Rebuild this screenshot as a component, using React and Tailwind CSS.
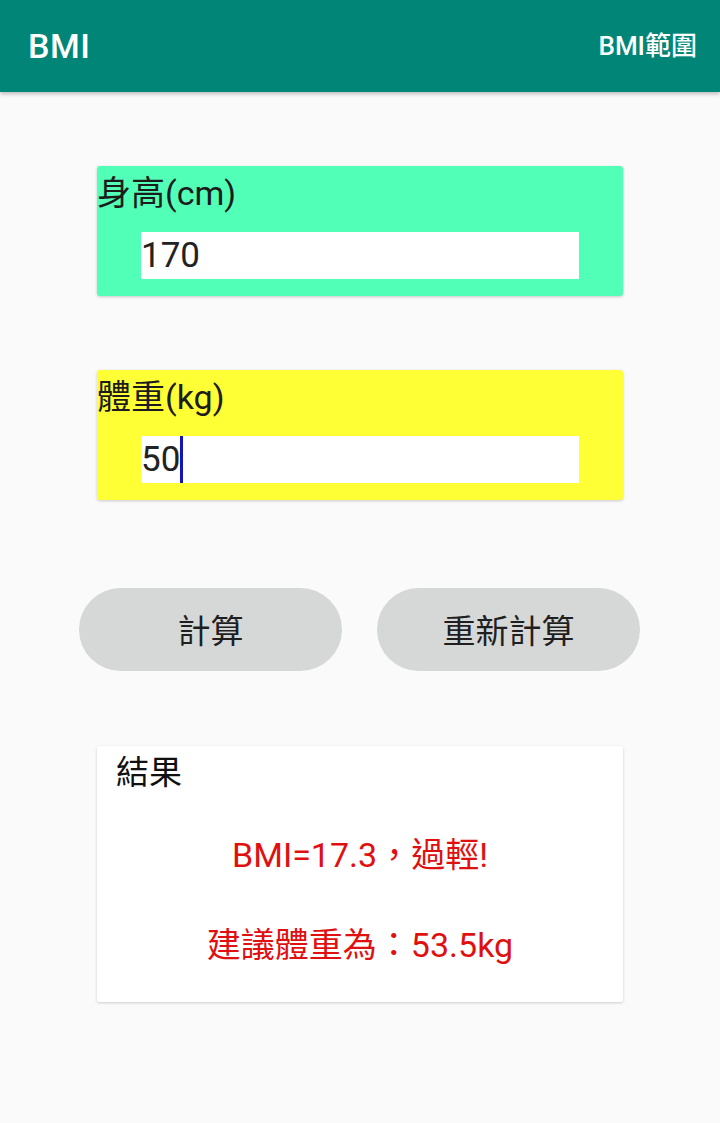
export default function App() {
  const latin = { fontFamily: 'Roboto, "Noto Sans CJK TC", sans-serif' };

  return (
    <div className="min-h-[1123px] bg-[#fafafa] text-[#1c1c1c]" style={latin}>
      {/* App bar */}
      <header className="h-[92px] bg-[#008577] flex items-center justify-between pl-[28px] pr-[23px] shadow-[0_2px_4px_rgba(0,0,0,0.25)]">
        <h1 className="text-white text-[34px] font-medium tracking-[0.5px]">BMI</h1>
        <span className="text-white text-[26px] font-medium">BMI範圍</span>
      </header>

      <main className="flex flex-col items-center pt-[74px]">
        {/* Height */}
        <div className="w-[526px] h-[130px] bg-[#52ffb7] rounded-[3px] shadow-[0_1px_3px_rgba(0,0,0,0.2)] flex flex-col">
          <p className="text-[34px] leading-[52px] pt-[1px]">身高(cm)</p>
          <div className="mx-[44px] mt-[13px] h-[47px] bg-white flex items-center">
            <span className="text-[35px] leading-none text-[#222]">170</span>
          </div>
        </div>

        {/* Weight */}
        <div className="mt-[74px] w-[526px] h-[130px] bg-[#ffff36] rounded-[3px] shadow-[0_1px_3px_rgba(0,0,0,0.2)] flex flex-col">
          <p className="text-[34px] leading-[52px] pt-[1px]">體重(kg)</p>
          <div className="mx-[44px] mt-[13px] h-[47px] bg-white flex items-center">
            <span className="text-[35px] leading-none text-[#222]">50</span>
            <span className="w-[3px] h-[47px] bg-[#1414b8]" />
          </div>
        </div>

        {/* Buttons */}
        <div className="mt-[88px] flex gap-[35px] pr-[1px]">
          <button className="w-[263px] h-[83px] pt-[5px] rounded-full bg-[#d6d7d7] text-[33px] text-[#1f1f1f]">
            計算
          </button>
          <button className="w-[263px] h-[83px] pt-[5px] rounded-full bg-[#d6d7d7] text-[33px] text-[#1f1f1f]">
            重新計算
          </button>
        </div>

        {/* Result */}
        <div className="mt-[75px] w-[526px] h-[256px] bg-white rounded-[2px] shadow-[0_1px_3px_rgba(0,0,0,0.18)] flex flex-col">
          <p className="text-[33px] leading-[52px] pl-[19px] pt-[1px] text-[#111]">結果</p>
          <div className="flex flex-col items-center text-[#e01010] text-[34px] mt-[32px] gap-[42px]">
            <p className="leading-[48px]">BMI=17.3，過輕!</p>
            <p className="leading-[48px]">建議體重為：53.5kg</p>
          </div>
        </div>
      </main>
    </div>
  );
}
